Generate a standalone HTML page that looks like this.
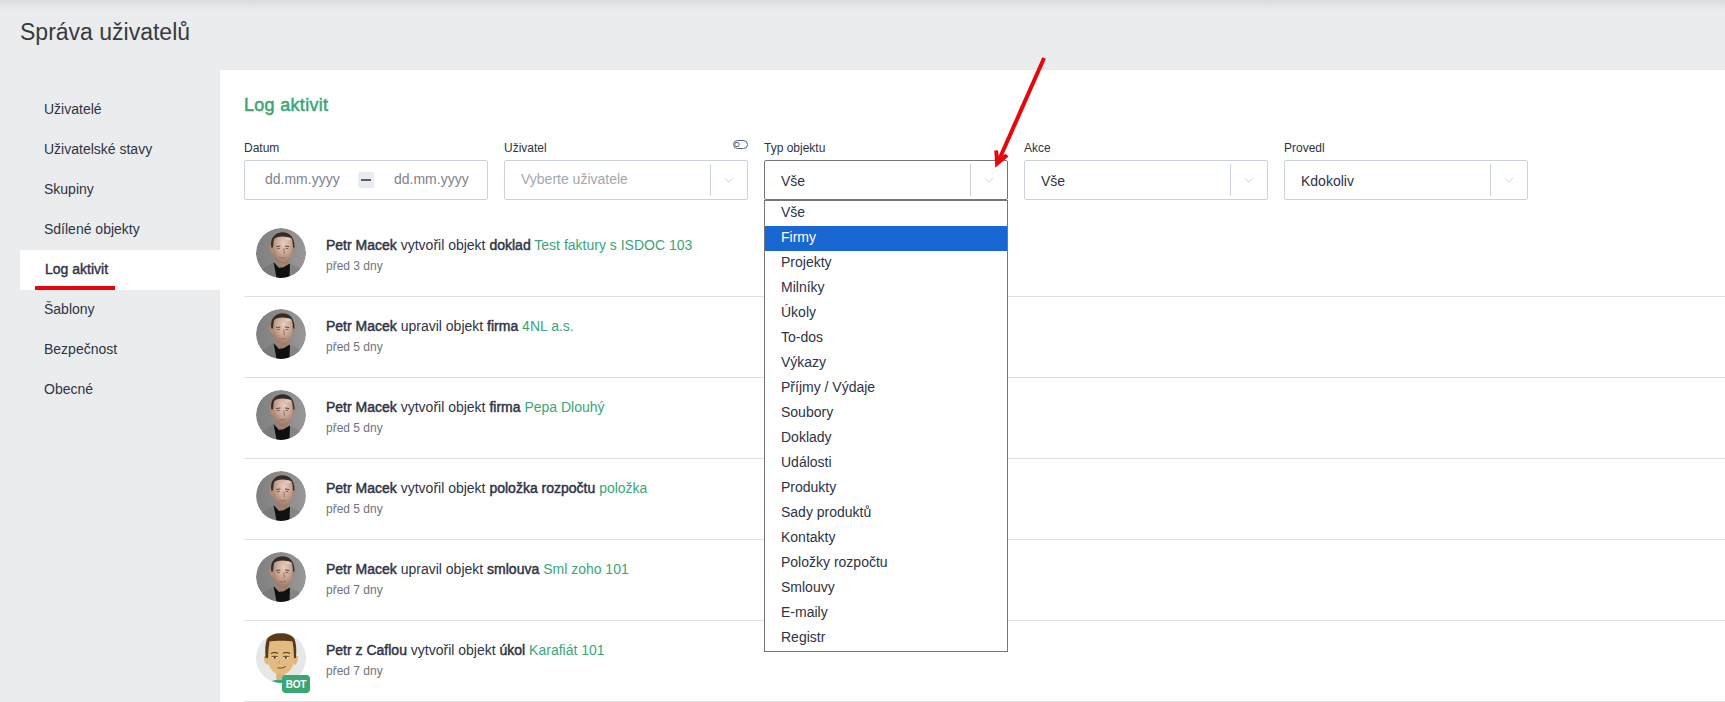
<!DOCTYPE html>
<html><head><meta charset="utf-8">
<style>
*{margin:0;padding:0;box-sizing:border-box}
html,body{width:1725px;height:702px;overflow:hidden}
body{background:#ebecee;font-family:"Liberation Sans",sans-serif;color:#2e3345;position:relative}
.topshade{position:absolute;left:0;top:0;width:1725px;height:10px;background:linear-gradient(#dbdcde,#ebecee)}
.title{position:absolute;left:20px;top:19px;font-size:23px;color:#383a3f;white-space:nowrap}
.side{position:absolute;left:20px;top:90px;width:200px}
.side div{height:40px;line-height:38px;padding-left:24px;font-size:14px;white-space:nowrap;position:relative}
.side div.act{background:#fff;-webkit-text-stroke:0.4px #2e3345;line-height:39px;padding-left:25px}
.side div.act:after{content:"";position:absolute;left:15px;width:80px;bottom:0;height:4px;background:#e4080c}
.panel{position:absolute;left:220px;top:70px;width:1505px;height:632px;background:#fff;box-shadow:0 0 3px rgba(0,0,0,.035)}
.h{position:absolute;left:244px;top:95px;font-size:18px;-webkit-text-stroke:0.5px #3aa677;letter-spacing:0.3px;color:#3aa677;white-space:nowrap}
.lbl{position:absolute;top:141px;font-size:12px;color:#2e3345;white-space:nowrap}
.inp{position:absolute;top:160px;width:244px;height:40px;border:1px solid #ccd3de;border-radius:2px;background:#fff}
.inp .v{position:absolute;left:16px;top:1px;line-height:38px;font-size:14px;white-space:nowrap}
.inp .sep{position:absolute;left:205px;top:3px;width:1px;height:32px;background:#ccd3de}
.inp .chev{position:absolute;left:219px;top:16px;width:10px;height:6px}
.dd{position:absolute;left:764px;top:200px;width:244px;height:452px;background:#fff;border:1px solid #767676}
.dd div{height:25px;line-height:23px;padding-bottom:2px;padding-left:16px;font-size:14px;white-space:nowrap}
.dd div.sel{background:#1967d2;color:#fff}
.item{position:absolute;left:244px;width:1481px;height:81px;border-bottom:1px solid #e0e0e0}
.av{position:absolute;left:12px;top:12px;width:50px;height:50px;border-radius:50%;overflow:hidden}
.t1{position:absolute;left:82px;top:21px;font-size:14px;white-space:nowrap}
.t1 b{font-weight:normal;-webkit-text-stroke:0.45px #2e3345}
.t1 .g{color:#3aa677}
.t2{position:absolute;left:82px;top:43px;font-size:12px;color:#6f7380;white-space:nowrap}

.inp .ph{color:#7f828b;top:-1px}
.minus{position:absolute;left:113px;top:11px;width:16px;height:16px;background:#ebecee;border-radius:2px}
.minus:after{content:"";position:absolute;left:3px;top:7px;width:10px;height:2px;background:#52607d}
.toggle{position:absolute;left:732px;top:139px}
.arrow{position:absolute;left:0;top:0}
.badge{position:absolute;left:38px;top:54px;width:28px;height:18px;background:#3aa672;border-radius:4px;color:#fff;font-size:10px;font-weight:bold;text-align:center;line-height:20px;letter-spacing:-0.2px}

</style></head><body>
<svg width="0" height="0" style="position:absolute">
<defs>
<linearGradient id="mbg" x1="0" x2="1" y1="0" y2="0"><stop offset="0" stop-color="#808080"/><stop offset="1" stop-color="#979797"/></linearGradient>
<radialGradient id="mface" cx="0.55" cy="0.3" r="0.65"><stop offset="0" stop-color="#e8cdbf"/><stop offset="0.55" stop-color="#cba795"/><stop offset="1" stop-color="#9f7b6b"/></radialGradient>
<clipPath id="mclip"><circle cx="25" cy="25" r="25"/></clipPath>
<clipPath id="bclip"><circle cx="25" cy="25" r="25"/></clipPath>
<symbol id="man" viewBox="0 0 50 50">
<g clip-path="url(#mclip)">
<rect width="50" height="50" fill="url(#mbg)"/>
<path d="M0 50 L1 45 Q7 39 17 35 L34 36 Q43 39 49 44 L50 50 Z" fill="#858585"/>
<path d="M5 42 Q9 39 17 35 L20 50 L12 50 Z" fill="#7a7a7a"/>
<path d="M17.5 34 L23 40 L28 39 L34 35.5 L33.5 50 L20.5 50 Z" fill="#101010"/>
<path d="M19.5 28 L33 28 L32 35 L27 39.5 L22 37.5 Z" fill="#a5806d"/>
<path d="M14 16.5 Q13.2 23 16.5 25.5 L18 24 L17.5 17 Z" fill="#b48b77"/>
<path d="M38.5 16.5 Q39.3 23 36 25.5 L34.5 24 L35 17 Z" fill="#a88270"/>
<path d="M16.8 14 Q17 7.5 26.5 7 Q36 7.5 36.8 14 L36.6 26 Q35 34 27.5 36 Q19.5 35 17.6 26 Z" fill="url(#mface)"/>
<path d="M15.2 19.5 Q13.5 6 26 4.3 Q38.5 4.5 38.5 19.5 L37 19.5 Q36.8 13 35.5 10.3 Q31 8.5 26.5 8.6 Q20 8.8 18 11.3 Q17.3 15 17 19.5 Z" fill="#352b26"/>
<ellipse cx="32" cy="10.8" rx="2.8" ry="1.6" fill="#eddad0" opacity="0.6"/>
<path d="M20.2 18.6 L24.3 18 M29 18 L33.2 18.6" stroke="#5e463b" stroke-width="1"/>
<path d="M21 20.6 L23.8 20.4 M29.5 20.4 L32.3 20.6" stroke="#735548" stroke-width="0.9"/>
<path d="M27.8 20.5 L28.5 26.2" stroke="#a07a68" stroke-width="1.2" fill="none"/>
<path d="M23.2 29.6 Q26.5 30.6 30 29.4" stroke="#946a5b" stroke-width="0.9" fill="none"/>
</g>
</symbol>
<symbol id="bot" viewBox="0 0 50 50">
<circle cx="25" cy="25" r="25" fill="#e6e7e8"/>
<g clip-path="url(#bclip)">
<path d="M12 50 Q18 46 24 46.5 Q30 46 38 50 Z" fill="#3aa672"/>
<path d="M20 36 L29 36 L28.5 47 L20.5 47 Z" fill="#d9b077"/>
</g>
<path d="M8 23 Q7.5 29 11 32 L12.5 31 L12 23 Z" fill="#deb67c"/>
<path d="M42 23 Q42.5 29 39 32 L37.5 31 L38 23 Z" fill="#deb67c"/>
<path d="M12 12 Q12 8 15 7 L35 7 Q38 8 38 12 L38 28 Q37 36 31 40 Q25.5 43 19 40 Q13 36 12 28 Z" fill="#e3bb80"/>
<path d="M9.5 25 Q8.5 12 11 6 Q15 0.3 25 0.3 Q35 0.3 38.5 6 Q41 12 40 25 L38 25 Q38 16 36.5 8.5 Q31 7.5 26 7.8 Q19 7.5 13.5 8.5 Q12.3 16 12 25 Z" fill="#5b3a1a"/>
<path d="M15 20.5 Q18.5 18.5 22 20.3 M27 20.3 Q30.5 18.5 34 20.5" stroke="#4e3418" stroke-width="1.1" fill="none"/>
<path d="M15.8 24.2 Q18.5 25.8 21.5 24.2 M27 24.2 Q30 25.8 33 24.2" fill="#f4f0e6" stroke="#f4f0e6" stroke-width="1.2"/>
<circle cx="18.7" cy="24.7" r="1.1" fill="#3b3328"/>
<circle cx="29.8" cy="24.7" r="1.1" fill="#3b3328"/>
<path d="M15.5 23.8 Q18.5 22.6 21.8 23.8 M26.8 23.8 Q30 22.6 33.3 23.8" stroke="#6d4c2a" stroke-width="1" fill="none"/>
<path d="M23.5 27 Q22.5 30 24 31.3" stroke="#c99a62" stroke-width="0.8" fill="none"/>
<path d="M21.5 34.8 Q25.5 36 29 34 Q29.6 33.5 29.3 33" stroke="#6b4a2a" stroke-width="1" fill="none"/>
</symbol>
</defs></svg>
<div class="topshade"></div>
<div class="title">Správa uživatelů</div>
<div class="panel"></div>
<div class="side">
<div>Uživatelé</div>
<div>Uživatelské stavy</div>
<div>Skupiny</div>
<div>Sdílené objekty</div>
<div class="act">Log aktivit</div>
<div>Šablony</div>
<div>Bezpečnost</div>
<div>Obecné</div>
</div>
<div class="h">Log aktivit</div>

<div class="lbl" style="left:244px">Datum</div>
<div class="lbl" style="left:504px">Uživatel</div>
<div class="lbl" style="left:764px">Typ objektu</div>
<div class="lbl" style="left:1024px">Akce</div>
<div class="lbl" style="left:1284px">Provedl</div>

<div class="inp" style="left:244px"><span class="v ph" style="left:20px">dd.mm.yyyy</span><div class="minus"></div><span class="v ph" style="left:149px">dd.mm.yyyy</span></div>
<div class="inp" style="left:504px"><span class="v" style="color:#a5a7ab;top:-1px">Vyberte uživatele</span><div class="sep"></div><svg class="chev" width="10" height="6" viewBox="0 0 10 6"><path d="M0.6 1.2 L4.8 5 L8.8 1.2" fill="none" stroke="#cdd3dd" stroke-width="1"/></svg></div>
<div class="inp" style="left:764px;border-color:#767676"><span class="v">Vše</span><div class="sep"></div><svg class="chev" width="10" height="6" viewBox="0 0 10 6"><path d="M0.6 1.2 L4.8 5 L8.8 1.2" fill="none" stroke="#cdd3dd" stroke-width="1"/></svg></div>
<div class="inp" style="left:1024px"><span class="v">Vše</span><div class="sep"></div><svg class="chev" width="10" height="6" viewBox="0 0 10 6"><path d="M0.6 1.2 L4.8 5 L8.8 1.2" fill="none" stroke="#cdd3dd" stroke-width="1"/></svg></div>
<div class="inp" style="left:1284px"><span class="v">Kdokoliv</span><div class="sep"></div><svg class="chev" width="10" height="6" viewBox="0 0 10 6"><path d="M0.6 1.2 L4.8 5 L8.8 1.2" fill="none" stroke="#cdd3dd" stroke-width="1"/></svg></div>

<div class="item" style="top:216px"><div class="av"><svg width="50" height="50" viewBox="0 0 50 50"><use href="#man"/></svg></div><div class="t1"><b>Petr Macek</b> vytvořil objekt <b>doklad</b> <span class="g">Test faktury s ISDOC 103</span></div><div class="t2">před 3 dny</div></div>
<div class="item" style="top:297px"><div class="av"><svg width="50" height="50" viewBox="0 0 50 50"><use href="#man"/></svg></div><div class="t1"><b>Petr Macek</b> upravil objekt <b>firma</b> <span class="g">4NL a.s.</span></div><div class="t2">před 5 dny</div></div>
<div class="item" style="top:378px"><div class="av"><svg width="50" height="50" viewBox="0 0 50 50"><use href="#man"/></svg></div><div class="t1"><b>Petr Macek</b> vytvořil objekt <b>firma</b> <span class="g">Pepa Dlouhý</span></div><div class="t2">před 5 dny</div></div>
<div class="item" style="top:459px"><div class="av"><svg width="50" height="50" viewBox="0 0 50 50"><use href="#man"/></svg></div><div class="t1"><b>Petr Macek</b> vytvořil objekt <b>položka rozpočtu</b> <span class="g">položka</span></div><div class="t2">před 5 dny</div></div>
<div class="item" style="top:540px"><div class="av"><svg width="50" height="50" viewBox="0 0 50 50"><use href="#man"/></svg></div><div class="t1"><b>Petr Macek</b> upravil objekt <b>smlouva</b> <span class="g">Sml zoho 101</span></div><div class="t2">před 7 dny</div></div>
<div class="item" style="top:621px"><div class="av" style="overflow:visible"><svg width="50" height="50" viewBox="0 0 50 50"><use href="#bot"/></svg></div><div class="badge">BOT</div><div class="t1"><b>Petr z Caflou</b> vytvořil objekt <b>úkol</b> <span class="g">Karafiát 101</span></div><div class="t2">před 7 dny</div></div>


<div class="dd">
<div>Vše</div><div class="sel">Firmy</div><div>Projekty</div><div>Milníky</div><div>Úkoly</div><div>To-dos</div><div>Výkazy</div><div>Příjmy / Výdaje</div><div>Soubory</div><div>Doklady</div><div>Události</div><div>Produkty</div><div>Sady produktů</div><div>Kontakty</div><div>Položky rozpočtu</div><div>Smlouvy</div><div>E-maily</div><div>Registr</div>
</div>
<svg class="toggle" width="17" height="11" viewBox="0 0 17 11"><rect x="1.5" y="1.5" width="14" height="8" rx="4" fill="none" stroke="#56627a" stroke-width="1"/><circle cx="5" cy="5.5" r="2.2" fill="none" stroke="#56627a" stroke-width="1"/></svg>
<svg class="arrow" width="1725" height="702"><line x1="1044.1" y1="58" x2="999" y2="160" stroke="#e5070c" stroke-width="4"/><polygon points="994.3,150.5 998,150.3 998.8,156.5 1006,154.1 1008.5,156.6 995.3,167.8" fill="#e5070c"/></svg>
</body></html>
